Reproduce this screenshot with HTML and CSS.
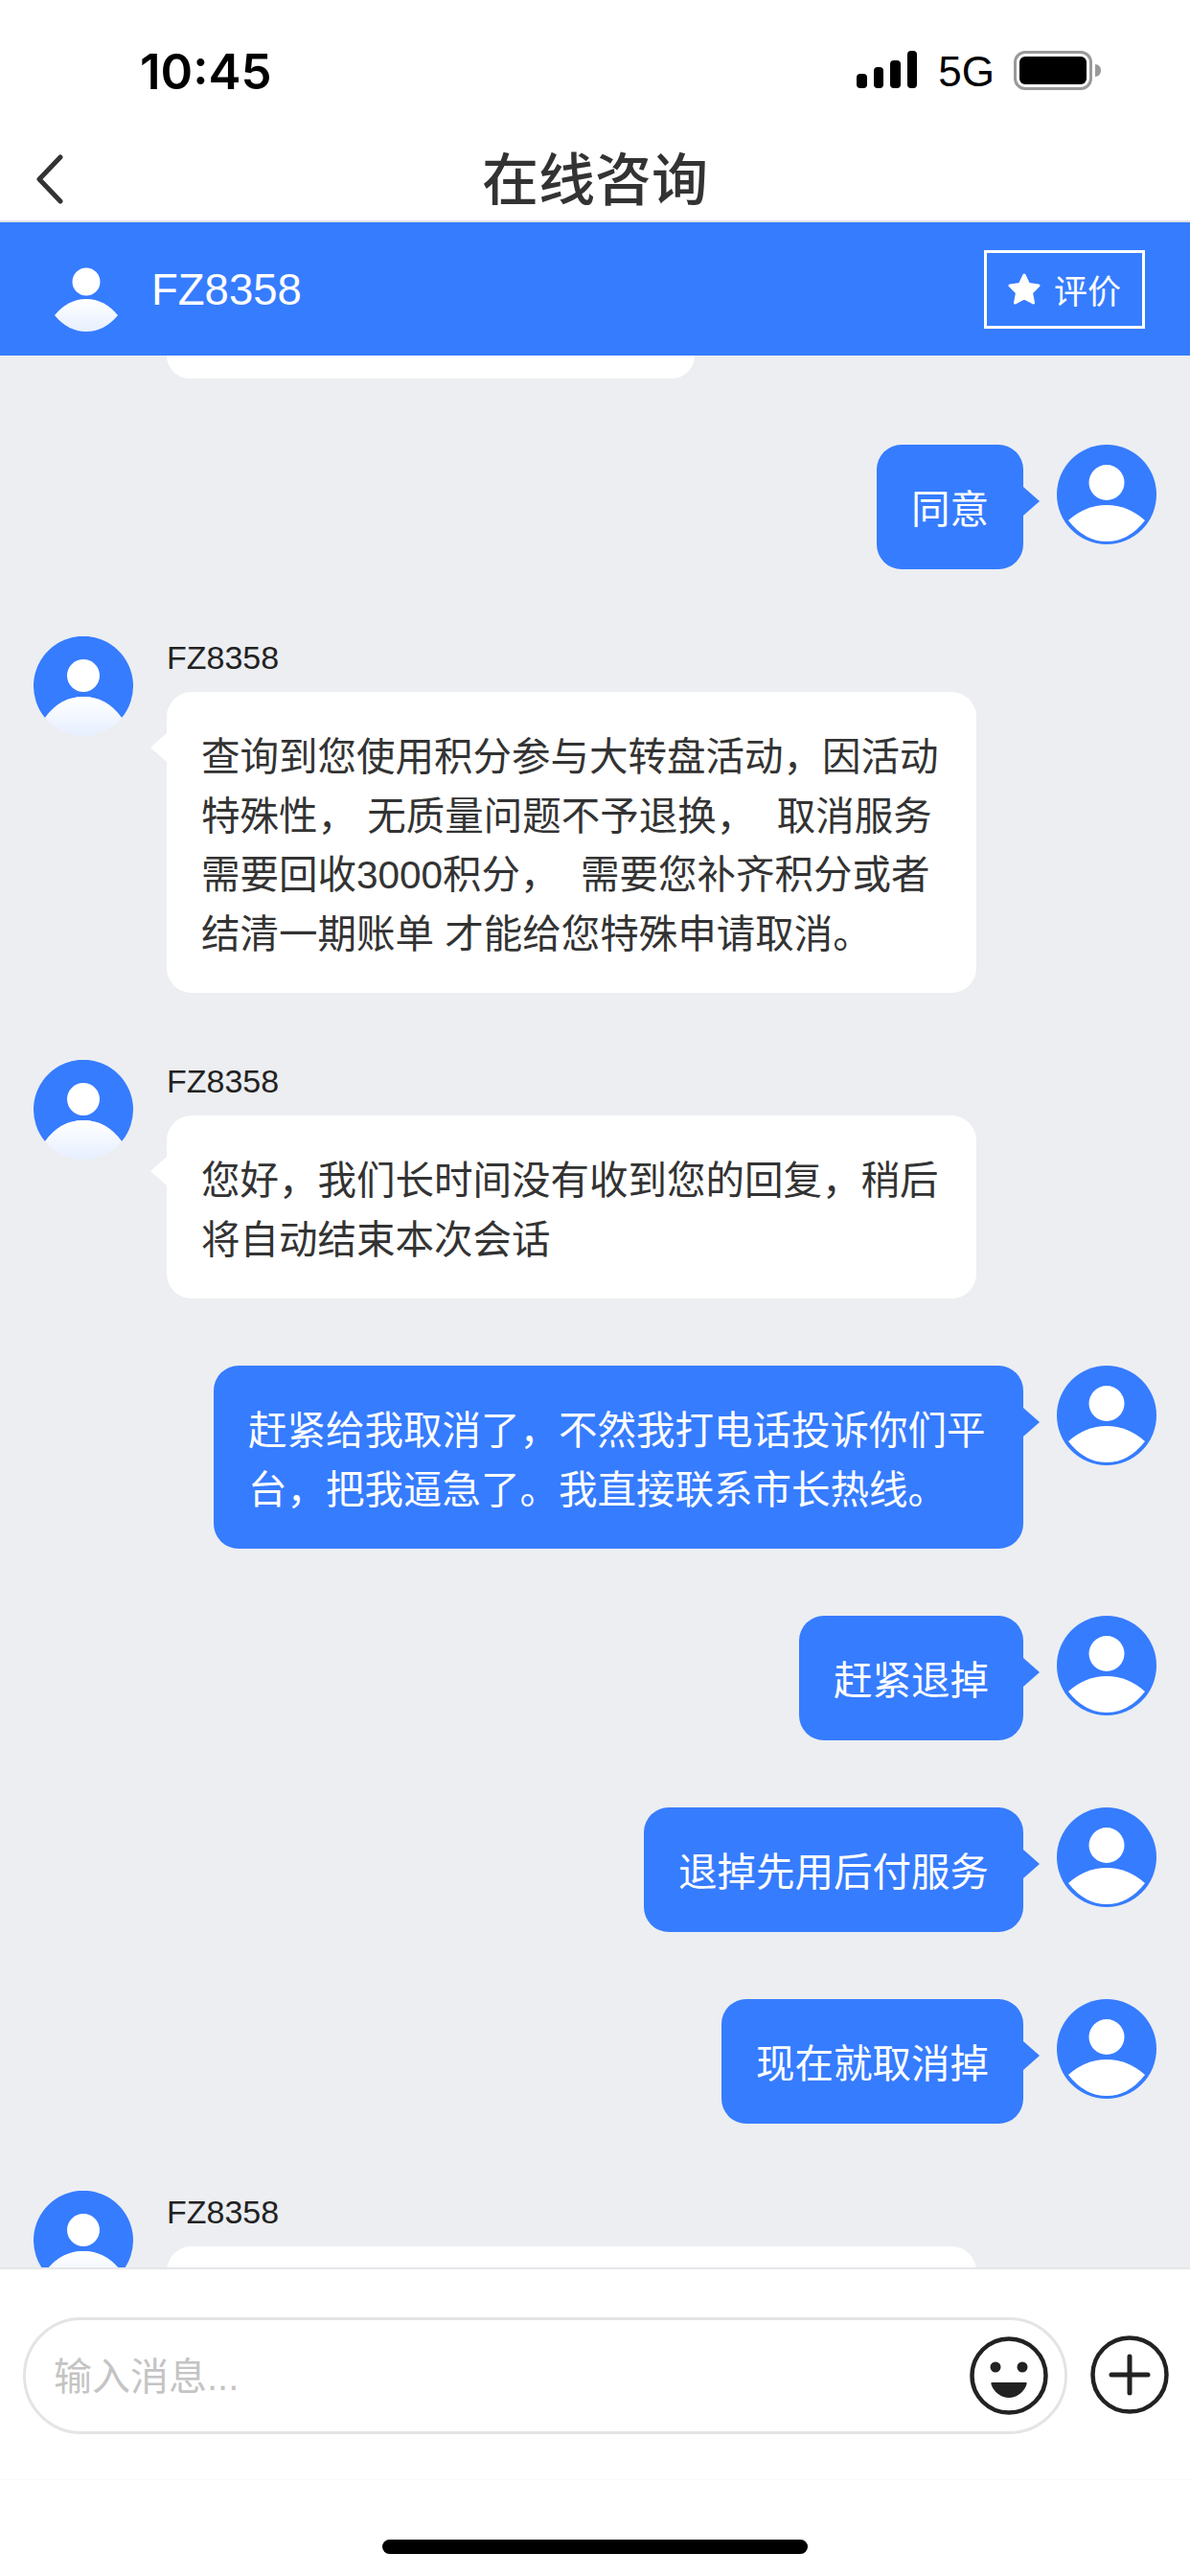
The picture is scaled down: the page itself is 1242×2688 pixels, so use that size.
FILE: index.html
```html
<!DOCTYPE html>
<html lang="zh-CN">
<head>
    <meta charset="UTF-8">
    <title>在线咨询</title>
    <link rel="stylesheet" href="styles.css">
</head>
<body>
<div class="page">

    <svg class="defs" width="0" height="0">
        <defs>
            <linearGradient id="bodyFade" x1="0" y1="0" x2="0" y2="1">
                <stop offset="0" stop-color="#fff"/>
                <stop offset="1" stop-color="#e6efff"/>
            </linearGradient>
            <symbol id="avatarThem" viewBox="0 0 104 104">
                <path d="M12 85 A52 52 0 1 1 92 85 Q76 63 52 63 Q28 63 12 85 Z" fill="#367cff"/>
                <circle cx="52" cy="41" r="17" fill="#fff"/>
                <path d="M12 85 Q28 63 52 63 Q76 63 92 85 A52 52 0 0 1 12 85 Z" fill="url(#bodyFade)"/>
            </symbol>
            <symbol id="avatarMe" viewBox="0 0 104 104">
                <circle cx="52" cy="52" r="52" fill="#367cff"/>
                <circle cx="52" cy="39.5" r="18.5" fill="#fff"/>
                <path d="M12 79 Q30 63 52 63 Q74 63 92 79 Q75 101 52 101 Q29 101 12 79 Z" fill="#fff"/>
            </symbol>
        </defs>
    </svg>

    <header class="status">
        <span class="time">10:45</span>
        <div class="status-right">
            <div class="signal"><i></i><i></i><i></i><i></i></div>
            <span class="net">5G</span>
            <div class="battery"><div class="battery-fill"></div></div>
            <div class="battery-nub"></div>
        </div>
    </header>

    <nav class="nav">
        <svg class="back" width="30" height="52" viewBox="0 0 30 52">
            <path d="M26 3 L4 26 L26 49" fill="none" stroke="#333" stroke-width="5" stroke-linecap="round" stroke-linejoin="round"/>
        </svg>
        <h1 class="title">在线咨询</h1>
    </nav>

    <div class="agent-bar">
        <svg class="agent-icon" width="66" height="67" viewBox="0 0 66 67">
            <circle cx="33" cy="15" r="14.5" fill="#fff"/>
            <path d="M0 50 Q14 33 33 33 Q52 33 66 50 Q52 67 33 67 Q14 67 0 50 Z" fill="url(#bodyFade)"/>
        </svg>
        <span class="agent-name">FZ8358</span>
        <button class="rate-btn">
            <svg width="34" height="33" viewBox="0 0 34 33">
                <path d="M17 2 L21.5 11.5 L32 13 L24.5 20.5 L26.5 31 L17 26 L7.5 31 L9.5 20.5 L2 13 L12.5 11.5 Z" fill="#fff" stroke="#fff" stroke-width="3" stroke-linejoin="round"/>
            </svg>
            <span>评价</span>
        </button>
    </div>

    <main class="chat">
        <div class="cut-bubble"></div>

        <div class="msg me">
            <div class="bubble">同意</div>
            <svg class="avatar"><use href="#avatarMe"/></svg>
        </div>

        <div class="msg them">
            <svg class="avatar"><use href="#avatarThem"/></svg>
            <div class="msg-body">
                <p class="sender">FZ8358</p>
                <div class="bubble">查询到您使用积分参与大转盘活动，因活动特殊性， 无质量问题不予退换， &nbsp;取消服务需要回收3000积分， &nbsp;需要您补齐积分或者结清一期账单 才能给您特殊申请取消。</div>
            </div>
        </div>

        <div class="msg them">
            <svg class="avatar"><use href="#avatarThem"/></svg>
            <div class="msg-body">
                <p class="sender">FZ8358</p>
                <div class="bubble">您好，我们长时间没有收到您的回复，稍后将自动结束本次会话</div>
            </div>
        </div>

        <div class="msg me">
            <div class="bubble">赶紧给我取消了，不然我打电话投诉你们平台，把我逼急了。我直接联系市长热线。</div>
            <svg class="avatar"><use href="#avatarMe"/></svg>
        </div>

        <div class="msg me">
            <div class="bubble">赶紧退掉</div>
            <svg class="avatar"><use href="#avatarMe"/></svg>
        </div>

        <div class="msg me">
            <div class="bubble">退掉先用后付服务</div>
            <svg class="avatar"><use href="#avatarMe"/></svg>
        </div>

        <div class="msg me">
            <div class="bubble">现在就取消掉</div>
            <svg class="avatar"><use href="#avatarMe"/></svg>
        </div>

        <div class="msg them">
            <svg class="avatar"><use href="#avatarThem"/></svg>
            <div class="msg-body">
                <p class="sender">FZ8358</p>
                <div class="bubble">&nbsp;</div>
            </div>
        </div>
    </main>

    <footer class="composer">
        <div class="input-box">
            <span class="placeholder">输入消息...</span>
            <svg width="82" height="82" viewBox="0 0 82 82">
                <circle cx="41" cy="41" r="38.5" fill="none" stroke="#222" stroke-width="4.5"/>
                <circle cx="27" cy="32" r="5.5" fill="#222"/>
                <circle cx="55" cy="32" r="5.5" fill="#222"/>
                <path d="M23 48 H59 Q60 48 59.5 50 C57 58 49 64 41 64 C33 64 25 58 22.5 50 Q22 48 23 48 Z" fill="#222"/>
            </svg>
        </div>
        <svg class="plus" width="82" height="82" viewBox="0 0 82 82">
            <circle cx="41" cy="41" r="38.5" fill="none" stroke="#222" stroke-width="4.5"/>
            <path d="M41 22 V60 M22 41 H60" stroke="#222" stroke-width="5" stroke-linecap="round"/>
        </svg>
    </footer>

    <div class="home-area">
        <div class="home-bar"></div>
    </div>
</div>
</body>
</html>
```

FILE: styles.css
```css
* {
    margin: 0;
    padding: 0;
    box-sizing: border-box;
}
body {
    background: #fff;
    font-family: "Liberation Sans", "Noto Sans CJK SC", sans-serif;
}
.defs {
    position: absolute;
}
.page {
    width: 1242px;
    height: 2688px;
    display: flex;
    flex-direction: column;
    overflow: hidden;
}

/* status bar */
.status {
    height: 130px;
    flex: none;
    display: flex;
    justify-content: space-between;
    align-items: flex-start;
    padding: 47px 93px 0 146px;
}
.time {
    font-family: Inter, "Liberation Sans", sans-serif;
    font-size: 51px;
    line-height: 56px;
    font-weight: 600;
    color: #000;
}
.status-right {
    display: flex;
    align-items: flex-start;
    padding-top: 6px;
}
.signal {
    display: flex;
    align-items: flex-end;
    gap: 7px;
    height: 39px;
    margin-right: 22px;
}
.signal i {
    display: block;
    width: 10.5px;
    background: #000;
    border-radius: 4px;
}
.signal i:nth-child(1) { height: 15px; }
.signal i:nth-child(2) { height: 22px; }
.signal i:nth-child(3) { height: 29px; }
.signal i:nth-child(4) { height: 39px; }
.net {
    font-size: 44px;
    line-height: 44px;
    color: #000;
    margin-right: 20px;
}
.battery {
    width: 82px;
    height: 41px;
    border: 3.5px solid #999;
    border-radius: 12px;
    padding: 3px;
}
.battery-fill {
    width: 100%;
    height: 100%;
    background: #000;
    border-radius: 6px;
}
.battery-nub {
    width: 6px;
    height: 13px;
    margin: 14px 0 0 3px;
    background: #999;
    border-radius: 0 6px 6px 0;
}

/* nav */
.nav {
    height: 102px;
    flex: none;
    position: relative;
    display: flex;
    justify-content: center;
    border-bottom: 2px solid #dfe1e4;
}
.back {
    position: absolute;
    left: 37px;
    top: 31px;
}
.title {
    font-size: 59px;
    line-height: 100px;
    font-weight: 500;
    color: #333;
    margin-top: 9px;
}

/* blue bar */
.agent-bar {
    height: 139px;
    flex: none;
    background: #367cff;
    display: flex;
    align-items: center;
    padding: 0 47px 0 57px;
}
.agent-icon {
    margin-top: 21px;
}
.agent-name {
    font-size: 45.5px;
    line-height: 50px;
    color: #fff;
    margin: 2px 0 0 35px;
    flex: 1;
}
.rate-btn {
    width: 168px;
    height: 82px;
    border: 3px solid #fff;
    background: none;
    color: #fff;
    font-family: inherit;
    font-size: 35px;
    display: flex;
    align-items: center;
    justify-content: center;
    gap: 14px;
}

/* messages */
.chat {
    flex: 1;
    min-height: 0;
    background: #eceef1;
    display: flex;
    flex-direction: column;
    gap: 70px;
    overflow: hidden;
}
.cut-bubble {
    flex: none;
    width: 551px;
    height: 24px;
    margin-left: 174px;
    margin-bottom: -1px;
    background: #fff;
    border-radius: 0 0 30px 30px;
}
.msg {
    flex: none;
    display: flex;
    align-items: flex-start;
    gap: 35px;
    padding: 0 35px;
}
.msg.me {
    justify-content: flex-end;
}
.avatar {
    width: 104px;
    height: 104px;
    flex: none;
}
.msg-body {
    width: 845px;
}
.sender {
    font-size: 34px;
    line-height: 44px;
    color: #222;
    margin-bottom: 14px;
}
.bubble {
    position: relative;
    max-width: 845px;
    min-height: 130px;
    padding: 38px 36px 30px;
    border-radius: 26px;
    font-size: 40.5px;
    line-height: 61.5px;
}
.me .bubble {
    background: #367cff;
    color: #fff;
}
.them .bubble {
    background: #fff;
    color: #333;
}
.bubble::after {
    content: "";
    position: absolute;
    width: 0;
    height: 0;
    border-top: 15px solid transparent;
    border-bottom: 15px solid transparent;
}
.me .bubble::after {
    right: -17px;
    top: 44px;
    border-left: 17px solid #367cff;
}
.them .bubble::after {
    left: -17px;
    top: 43px;
    border-right: 17px solid #fff;
}

/* input */
.composer {
    height: 222px;
    flex: none;
    background: #fff;
    border-top: 2px solid #e4e6e9;
    border-bottom: 1px solid #f8f8f8;
    display: flex;
    align-items: flex-start;
    padding: 50px 22px 0 24px;
    gap: 24px;
}
.input-box {
    width: 1090px;
    height: 122px;
    border: 3px solid #e4e4e4;
    border-radius: 61px;
    display: flex;
    align-items: center;
    justify-content: space-between;
    padding: 0 17px 0 29px;
}
.placeholder {
    font-size: 40px;
    line-height: 46px;
    margin-top: 2px;
    color: #c4c4c4;
}
.plus {
    margin-top: 19px;
}

.home-area {
    flex: none;
    height: 100px;
    display: flex;
    justify-content: center;
    padding-top: 62px;
}
.home-bar {
    width: 444px;
    height: 15px;
    background: #000;
    border-radius: 8px;
}
```
